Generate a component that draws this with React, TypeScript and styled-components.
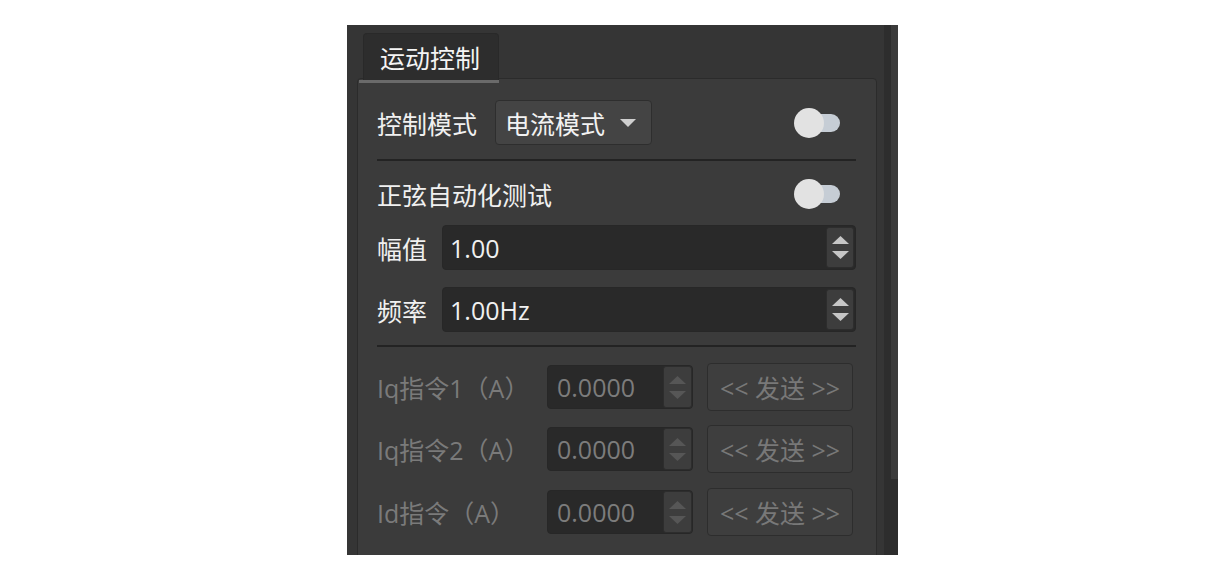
import React from "react";
import styled, { createGlobalStyle } from "styled-components";

const GlobalStyle = createGlobalStyle`
  html, body { margin: 0; padding: 0; background: #ffffff; }
  body { font-family: "Open Sans", "Noto Sans CJK SC", sans-serif; }
  * { box-sizing: border-box; }
`;

const Page = styled.div`
  width: 551px;
  height: 530px;
  margin: 25px 0 0 347px;
  display: flex;
  background: #353535;
  overflow: hidden;
  font-size: 25px;
  color: #f0f0f0;
`;

const Main = styled.div`
  flex: 1;
  min-width: 0;
  display: flex;
  flex-direction: column;
  padding: 8px 7px 0 10px;
`;

const TabBar = styled.div`
  display: flex;
  padding-left: 6px;
  position: relative;
  z-index: 1;
  margin-bottom: -5px;
`;

const Tab = styled.div`
  position: relative;
  width: 136px;
  height: 50px;
  padding: 0 0 3px 16px;
  display: flex;
  align-items: center;
  background: #2d2d2d;
  border: 1px solid #292929;
  border-bottom: none;
  border-radius: 4px 4px 0 0;
  color: #f4f4f4;
  &::after {
    content: "";
    position: absolute;
    left: -5px;
    right: -1px;
    bottom: 0;
    height: 3px;
    background: #6a6a6a;
  }
`;

const Pane = styled.div`
  flex: 1;
  margin-bottom: -10px;
  background: #3b3b3b;
  border: 1px solid #2b2b2b;
  border-radius: 4px;
  padding: 21px 20px 0 19px;
  display: flex;
  flex-direction: column;
`;

const Row = styled.div<{ $top: number; $h: number }>`
  display: flex;
  align-items: center;
  height: ${(p) => p.$h}px;
  margin-top: ${(p) => p.$top}px;
`;

const Label = styled.span<{ $gap?: number; $w?: number; $dim?: boolean }>`
  white-space: nowrap;
  margin-right: ${(p) => p.$gap ?? 0}px;
  ${(p) => (p.$w ? `width: ${p.$w}px; flex: none;` : "")}
  color: ${(p) => (p.$dim ? "#7a7a7a" : "#f0f0f0")};
`;

const Separator = styled.div<{ $top: number }>`
  height: 2px;
  margin-top: ${(p) => p.$top}px;
  background: #232323;
`;

const Combo = styled.div`
  width: 157px;
  height: 45px;
  display: flex;
  align-items: center;
  justify-content: space-between;
  padding: 0 15px 0 9px;
  background: #444444;
  border: 1px solid #2e2e2e;
  border-radius: 4px;
  color: #f2f2f2;
`;

const Spacer = styled.div`
  flex: 1;
`;

const Toggle = styled.div`
  position: relative;
  width: 46px;
  height: 30px;
  margin-right: 16px;
  flex: none;
`;

const Track = styled.div`
  position: absolute;
  left: 6px;
  top: 6px;
  width: 40px;
  height: 18px;
  border-radius: 9px;
  background: #c6cdd5;
`;

const Knob = styled.div`
  position: absolute;
  left: 0;
  top: 0;
  width: 30px;
  height: 30px;
  border-radius: 50%;
  background: #e2e2e2;
`;

const SpinInput = styled.div<{ $w?: number; $h: number; $dim?: boolean }>`
  ${(p) => (p.$w ? `width: ${p.$w}px; flex: none;` : "flex: 1;")}
  height: ${(p) => p.$h}px;
  display: flex;
  align-items: stretch;
  background: #292929;
  border: 1px solid #272727;
  border-radius: 4px;
  color: ${(p) => (p.$dim ? "#7c7c7c" : "#f0f0f0")};
`;

const Value = styled.span<{ $pad: number }>`
  flex: 1;
  display: flex;
  align-items: center;
  padding-left: ${(p) => p.$pad}px;
`;

const Spin = styled.div<{ $w: number; $inset: number }>`
  width: ${(p) => p.$w}px;
  margin: ${(p) => p.$inset}px ${(p) => p.$inset}px ${(p) => p.$inset}px 0;
  display: flex;
  flex-direction: column;
  align-items: center;
  justify-content: center;
  gap: 7px;
  background: #3d3d3d;
  border: 1px solid #2d2d2d;
  border-radius: 3px;
`;

const SendButton = styled.div`
  width: 146px;
  height: 48px;
  margin-left: 14px;
  display: flex;
  align-items: center;
  justify-content: center;
  background: #3e3e3e;
  border: 1px solid #2d2d2d;
  border-radius: 4px;
  color: #787878;
  white-space: nowrap;
`;

const ScrollBar = styled.div`
  width: 14px;
  flex: none;
  display: flex;
  justify-content: flex-end;
  background: #2d2d2d;
`;

const Handle = styled.div`
  width: 7px;
  height: 454px;
  background: #3b3b3b;
`;

const Arrow = ({ up, color }: { up: boolean; color: string }) => (
  <svg width="17" height="8" viewBox="0 0 17 8">
    <polygon points={up ? "8.5,0 17,8 0,8" : "0,0 17,0 8.5,8"} fill={color} />
  </svg>
);

const DropArrow = () => (
  <svg width="16" height="8" viewBox="0 0 16 8">
    <polygon points="0,0 16,0 8,8" fill="#cfcfcf" />
  </svg>
);

const Switch = () => (
  <Toggle>
    <Track />
    <Knob />
  </Toggle>
);

const commands = [
  { label: "Iq指令1（A）", top: 16 },
  { label: "Iq指令2（A）", top: 14 },
  { label: "Id指令（A）", top: 15 },
];

export default function App() {
  return (
    <>
      <GlobalStyle />
      <Page>
        <Main>
          <TabBar>
            <Tab>运动控制</Tab>
          </TabBar>
          <Pane>
            <Row $top={0} $h={45}>
              <Label $gap={18}>控制模式</Label>
              <Combo>
                <span>电流模式</span>
                <DropArrow />
              </Combo>
              <Spacer />
              <Switch />
            </Row>
            <Separator $top={14} />
            <Row $top={17} $h={32}>
              <Label>正弦自动化测试</Label>
              <Spacer />
              <Switch />
            </Row>
            <Row $top={15} $h={45}>
              <Label $gap={15}>幅值</Label>
              <SpinInput $h={45}>
                <Value $pad={7}>1.00</Value>
                <Spin $w={28} $inset={1}>
                  <Arrow up color="#c6c6c6" />
                  <Arrow up={false} color="#c6c6c6" />
                </Spin>
              </SpinInput>
            </Row>
            <Row $top={17} $h={45}>
              <Label $gap={15}>频率</Label>
              <SpinInput $h={45}>
                <Value $pad={7}>1.00Hz</Value>
                <Spin $w={28} $inset={1}>
                  <Arrow up color="#c6c6c6" />
                  <Arrow up={false} color="#c6c6c6" />
                </Spin>
              </SpinInput>
            </Row>
            <Separator $top={13} />
            {commands.map((c) => (
              <Row key={c.label} $top={c.top} $h={48}>
                <Label $w={170} $dim>
                  {c.label}
                </Label>
                <SpinInput $w={146} $h={44} $dim>
                  <Value $pad={9}>0.0000</Value>
                  <Spin $w={29} $inset={0}>
                    <Arrow up color="#565656" />
                    <Arrow up={false} color="#565656" />
                  </Spin>
                </SpinInput>
                <SendButton>{"<< 发送 >>"}</SendButton>
              </Row>
            ))}
          </Pane>
        </Main>
        <ScrollBar>
          <Handle />
        </ScrollBar>
      </Page>
    </>
  );
}
